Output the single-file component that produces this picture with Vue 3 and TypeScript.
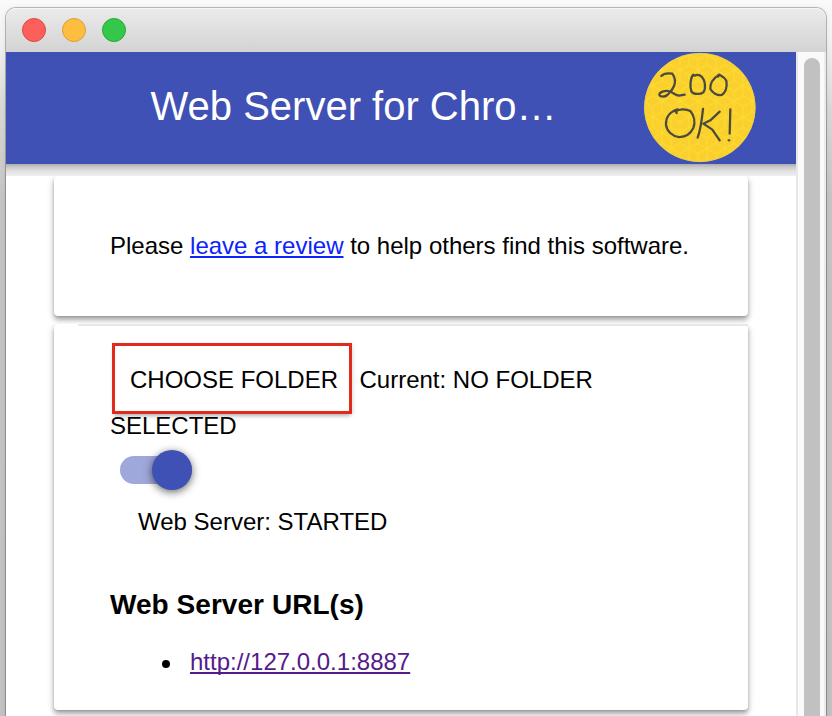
<script setup lang="ts">
const lights: string[] = ['close', 'minimize', 'maximize']
const serverUrls: string[] = ['http://127.0.0.1:8887']
</script>

<template>
  <div class="desktop">
    <div class="window">
      <div class="titlebar">
        <span v-for="light in lights" :key="light" class="light" :class="light"></span>
      </div>
      <div class="body">
        <div class="page">
          <header class="toolbar">
            <h1 class="title">Web Server for Chro…</h1>
            <svg class="badge" viewBox="42 36 336 336" aria-hidden="true">
              <defs>
                <pattern id="honeycomb" x="123" y="12" width="54" height="94" patternUnits="userSpaceOnUse">
                  <path
                    d="M27 0V16L0 31V63L27 78V94M27 16L54 31V63L27 78V47L0 31V0M27 47L54 31V0M0 94L27 78L54 94"
                    fill="none"
                    stroke="#fedc30"
                    stroke-width="3"
                  />
                </pattern>
              </defs>
              <ellipse cx="209.500" cy="202.500" rx="167" ry="163.500" fill="#f9d02e" />
              <ellipse cx="209.500" cy="202.500" rx="166" ry="162.500" fill="url(#honeycomb)" stroke="#e5cf59" stroke-width="2" />
              <g fill="none" stroke="#4b4a3c" stroke-width="6.800" stroke-linecap="round" stroke-linejoin="round">
                <path d="M94 108C101 100 116 99 127 101C134 111 137 126 132 138C128 149 121 157 112 165C103 172 90 171 88 165C88 156 104 151 115 153C128 156 136 166 147 167L164 164" />
                <path d="M190 104C181 113 179 140 184 154C190 164 211 164 220 157C229 145 225 121 216 111C209 104 199 104 193 107" />
                <path d="M267 104C252 114 240 130 241 146C247 159 262 167 275 165C288 158 292 138 289 122C284 111 277 109 268 104L264 110" />
                <path d="M143 208C119 215 107 233 108 254C110 274 127 288 146 291C168 292 182 280 190 264C197 246 192 226 181 213C167 205 147 207 137 214L140 219" />
                <path d="M219 207C216 235 213 265 203 293M269 215L241 241L220 251L247 269L269 301" />
                <path d="M301 208L299 281M296 301L298 301" />
              </g>
            </svg>
          </header>
          <main class="content">
            <section class="card review">
              <p class="line">Please <a class="link" href="#">leave a review</a> to help others find this software.</p>
            </section>
            <section class="card server">
              <div class="divider"></div>
              <div class="folder-row">
                <button class="choose" type="button"><span class="choose-label">CHOOSE FOLDER</span></button>
                <span class="current">Current: NO FOLDER</span>
              </div>
              <div class="line selected">SELECTED</div>
              <div class="toggle" role="switch" aria-checked="true"><span class="knob"></span></div>
              <p class="line status">Web Server: STARTED</p>
              <h2 class="heading">Web Server URL(s)</h2>
              <ul class="urls">
                <li v-for="url in serverUrls" :key="url" class="url">
                  <span class="bullet"></span><a class="link visited" href="#">{{ url }}</a>
                </li>
              </ul>
            </section>
          </main>
        </div>
        <div class="scrollbar"><div class="thumb"></div></div>
      </div>
    </div>
  </div>
</template>

<style>
body {
  margin: 0;
  overflow: hidden;
}
</style>

<style scoped>
* {
  box-sizing: border-box;
}
.desktop {
  width: 832px;
  height: 716px;
  padding: 8px 6px 0;
  overflow: hidden;
  background: linear-gradient(#fafafa 0, #f2f2f2 40px, #d8d8d8 110px, #c4c4c4 200px, #c2c2c2 100%);
  font-family: 'Liberation Sans', Arial, sans-serif;
  font-size: 24px;
  line-height: 28px;
  color: #000;
}
.window {
  width: 820px;
  height: 760px;
  border-radius: 10px 10px 0 0;
  box-shadow: 0 0 0 1px rgba(0, 0, 0, 0.25), 0 0 6px rgba(0, 0, 0, 0.08);
}
.titlebar {
  display: flex;
  gap: 16px;
  height: 44px;
  padding: 10px 16px;
  border-radius: 10px 10px 0 0;
  background: linear-gradient(#ebebeb, #d3d3d3);
  box-shadow: inset 0 1px 0 #f6f6f6;
}
.light {
  width: 24px;
  height: 24px;
  border: 1px solid;
  border-radius: 50%;
}
.close {
  background: #fd605b;
  border-color: #df4744;
}
.minimize {
  background: #fdbe40;
  border-color: #de9f34;
}
.maximize {
  background: #34c84a;
  border-color: #27aa35;
}
.body {
  display: flex;
  height: 716px;
}
.page {
  width: 790px;
  background: #fff;
}
.toolbar {
  display: flex;
  justify-content: space-between;
  height: 112px;
  padding: 0 40px 0 144.5px;
  background: #3f51b5;
}
.title {
  margin: 0;
  padding-top: 31px;
  font-size: 40px;
  font-weight: 400;
  line-height: 46px;
  color: #fff;
  white-space: nowrap;
}
.badge {
  width: 112px;
  height: 112px;
}
.content {
  padding: 12px 48px 0;
  background: linear-gradient(#adadad 0, #c9c9c9 3px, #e1e1e1 7px, #f0f0f0 12px, #fff 12px);
}
.card {
  border-radius: 4px;
  background: #fff;
  box-shadow: 0 4px 5px rgba(0, 0, 0, 0.28), 0 2px 10px rgba(0, 0, 0, 0.12), 0 1px 2px rgba(0, 0, 0, 0.12);
}
.review {
  height: 140px;
  padding: 56px;
  margin-bottom: 8px;
  clip-path: inset(0 -12px -8px -12px);
}
.line {
  margin: 0;
  white-space: nowrap;
}
.link {
  color: #0b24fb;
  text-decoration: underline;
  text-decoration-thickness: 2px;
  text-underline-offset: 2px;
  text-decoration-skip-ink: none;
}
.visited {
  color: #551a8b;
}
.server {
  height: 386px;
  padding: 0 0 0 56px;
  clip-path: inset(0 -12px -12px -12px);
}
.divider {
  height: 2px;
  margin-left: -32px;
  background: #e8e8e8;
}
.folder-row {
  display: flex;
  gap: 7.5px;
  height: 71px;
  margin: 17px 0 0 2px;
}
.choose {
  width: 240px;
  height: 71px;
  padding: 2px 0 0 4px;
  border: 3px solid #e1291c;
  background: #fff;
  box-shadow: 0 4px 4px -2px rgba(0, 0, 0, 0.25), 2px 1px 4px rgba(0, 0, 0, 0.08);
  font: inherit;
  color: #000;
}
.choose-label {
  white-space: nowrap;
}
.current {
  padding-top: 23px;
  white-space: nowrap;
}
.selected {
  margin-top: -2px;
}
.toggle {
  display: flex;
  justify-content: flex-end;
  align-items: center;
  width: 72px;
  height: 28px;
  margin: 16px 0 0 10px;
  border-radius: 14px;
  background: #9fa8da;
}
.knob {
  flex: none;
  width: 40px;
  height: 40px;
  border-radius: 50%;
  background: #3f51b5;
  box-shadow: 0 2px 8px rgba(0, 0, 0, 0.6);
}
.status {
  margin: 24px 0 0 28px;
}
.heading {
  margin: 53px 0 0;
  font-size: 28px;
  line-height: 32px;
  font-weight: 700;
  letter-spacing: 0.05px;
}
.urls {
  margin: 27px 0 0;
  padding: 0;
  list-style: none;
}
.url {
  display: flex;
  align-items: center;
  gap: 20px;
  padding-left: 52px;
}
.bullet {
  width: 8px;
  height: 8px;
  margin-top: 4px;
  border-radius: 50%;
  background: #000;
}
.scrollbar {
  width: 30px;
  padding: 6px 4px 0 6px;
  border-left: 2px solid #e8e8e8;
  border-right: 2px solid #ececec;
  background: #fafafa;
}
.thumb {
  width: 16px;
  height: 710px;
  border-radius: 8px;
  background: #c1c1c1;
}
</style>
